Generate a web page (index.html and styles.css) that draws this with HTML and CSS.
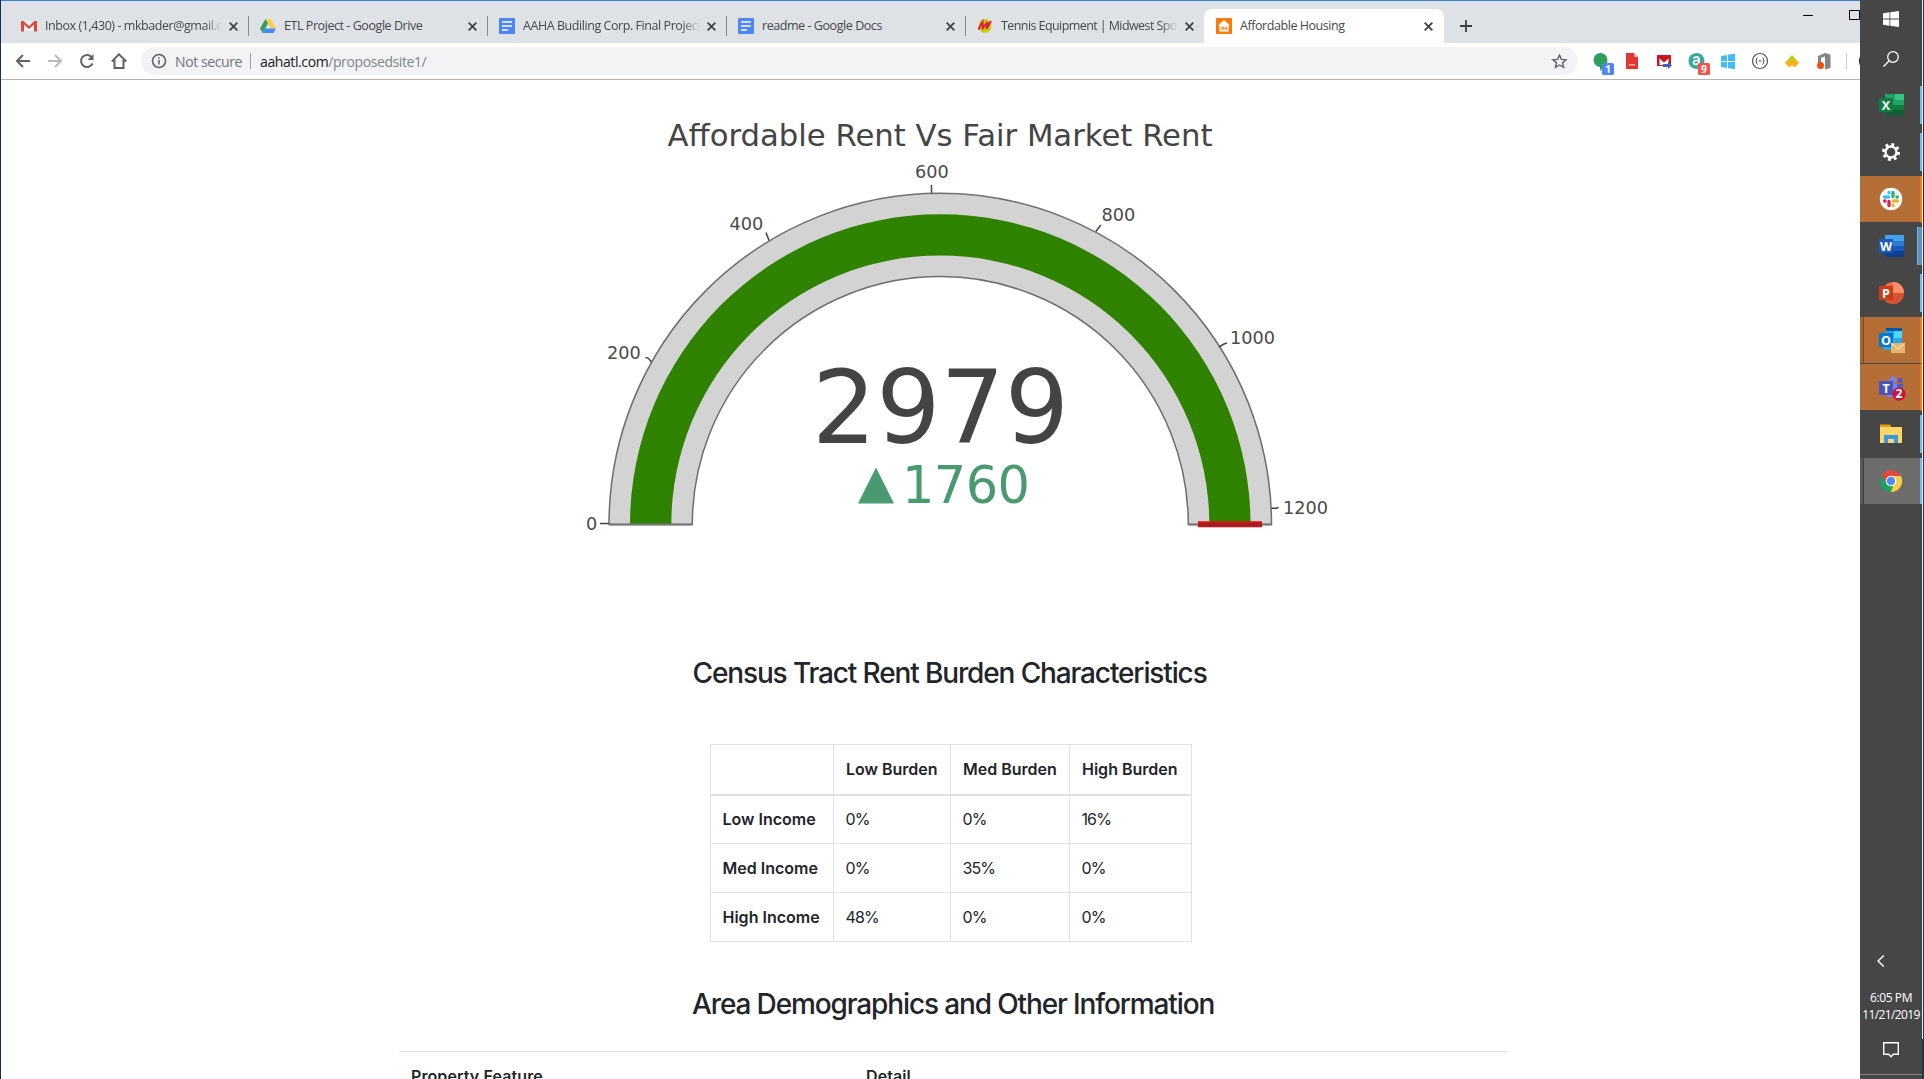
FILE: index.html
```html
<!DOCTYPE html>
<html lang="en">
<head>
<meta charset="utf-8">
<title>Affordable Housing</title>
<link rel="stylesheet" href="styles.css">
</head>
<body>
<div class="screen">
  <div class="browser">
    <div class="tabs">
      <div class="tab">
        <svg class="fav" viewBox="0 0 16 16"><path fill="#eee" d="M1 3h14v10H1z"/><path fill="#d54b3d" d="M0 3h2.500L8 8l5.500-5H16v10.500h-3V6.500L8 11 3 6.500v7H0z"/></svg>
        <span class="label fade">Inbox (1,430) - mkbader@gmail.com</span><svg class="x" viewBox="0 0 10 10"><path d="M1.500 1.500l7 7m0-7l-7 7"/></svg>
      </div>
      <div class="tab">
        <svg class="fav" viewBox="0 0 16 16"><path fill="#ffcf3f" d="M5.500 1h5L16 10.500h-5z"/><path fill="#31a05f" d="M5.500 1L8 5.500 2.700 15 0 10.500z"/><path fill="#4688f4" d="M5.300 10.500H16L13.400 15H2.700z"/></svg>
        <span class="label">ETL Project - Google Drive</span><svg class="x" viewBox="0 0 10 10"><path d="M1.500 1.500l7 7m0-7l-7 7"/></svg>
      </div>
      <div class="tab">
        <svg class="fav" viewBox="0 0 16 16"><rect width="16" height="16" rx="1" fill="#4f86f7"/><path d="M3 4h10M3 8h10M3 12h6" stroke="#fff" stroke-width="1.700"/></svg>
        <span class="label fade">AAHA Budiling Corp. Final Project</span><svg class="x" viewBox="0 0 10 10"><path d="M1.500 1.500l7 7m0-7l-7 7"/></svg>
      </div>
      <div class="tab">
        <svg class="fav" viewBox="0 0 16 16"><rect width="16" height="16" rx="1" fill="#4f86f7"/><path d="M3 4h10M3 8h10M3 12h6" stroke="#fff" stroke-width="1.700"/></svg>
        <span class="label">readme - Google Docs</span><svg class="x" viewBox="0 0 10 10"><path d="M1.500 1.500l7 7m0-7l-7 7"/></svg>
      </div>
      <div class="tab last">
        <svg class="fav" viewBox="0 0 16 16"><ellipse cx="8" cy="8" rx="6.500" ry="7" fill="#c3cf12"/><path d="M1.500 11.500L5.500 4l.5 6 4.500-6-1 7 4.500-8" fill="none" stroke="#dc1e3c" stroke-width="2"/></svg>
        <span class="label fade tight">Tennis Equipment | Midwest Sports</span><svg class="x" viewBox="0 0 10 10"><path d="M1.500 1.500l7 7m0-7l-7 7"/></svg>
      </div>
      <div class="tab active">
        <svg class="fav" viewBox="0 0 16 16"><rect width="16" height="16" fill="#f97b0c"/><path fill="#fff" d="M8 2l6 5.500h-1.500v6h-9v-6H2z"/><path d="M5.800 12V9.500h1.500V12m1.800 0V9.500h1.300V12" fill="none" stroke="#f97b0c"/></svg>
        <span class="label">Affordable Housing</span><svg class="x" viewBox="0 0 10 10"><path d="M1.500 1.500l7 7m0-7l-7 7"/></svg>
      </div>
      <svg class="plus" viewBox="0 0 12 12"><path d="M6 0v12M0 6h12"/></svg>
      <svg class="winbtns" viewBox="0 0 60 14"><path d="M3 7.500h10M49.500 2.500h10v9h-10z"/></svg>
    </div>
    <div class="toolbar">
      <svg class="nav" viewBox="0 0 16 16"><path d="M15 8H2M8 2L2 8l6 6"/></svg>
      <svg class="nav off" viewBox="0 0 16 16"><path d="M1 8h13M8 2l6 6-6 6"/></svg>
      <svg class="nav" viewBox="0 0 16 16"><path d="M13.500 10.500A6 6 0 1 1 12.500 4"/><path d="M14.500 1v6h-6z" class="solid"/></svg>
      <svg class="nav" viewBox="0 0 16 16"><path d="M0.800 8.500L8 1.300l7.200 7.200M3.500 7v8h9V7"/></svg>
      <div class="omnibox">
        <svg class="info" viewBox="0 0 16 16"><circle cx="8" cy="8" r="6.500"/><path d="M8 7v4.500M8 4.300v1.500"/></svg>
        <span class="secure">Not secure</span><span class="bar"></span><span class="url">aahatl.com<span>/proposedsite1/</span></span>
        <svg class="star" viewBox="0 0 24 24"><path d="M12 3l2.700 6 6.500.6-4.900 4.300 1.500 6.400L12 16.900l-5.800 3.400 1.500-6.400-4.900-4.300 6.500-.6z"/></svg>
      </div>
      <div class="exts">
        <svg viewBox="0 0 24 26"><circle cx="8.500" cy="9" r="7" fill="#2e9e58"/><path d="M8 15v5l5-6" fill="#2e9e58"/><rect x="10" y="12" width="12" height="12" rx="1.500" fill="#4f86f7"/><text x="16" y="22">1</text></svg>
        <svg viewBox="0 0 24 26"><path fill="#e03530" d="M2 2h8l4 4v12H2z"/><path fill="#ffb0a8" d="M10 2l4 4h-4zM5 13h6v1.500H5z"/></svg>
        <svg viewBox="0 0 24 26"><path fill="#c8171e" d="M1 4h14v11H1z"/><path fill="#fff" d="M3.500 14V7L8 11l4.500-4v7z"/><path d="M2 5l6 5.500L14 5" fill="none" stroke="#c8171e" stroke-width="1.600"/><path fill="#3c62ba" d="M7 13h5v-2l4 3.500-4 3.500v-2H7z"/></svg>
        <svg viewBox="0 0 24 26"><circle cx="8.500" cy="10" r="8" fill="#3aa79b"/><path d="M5.500 7.500Q7 5.500 9.500 6q1.500.5 1.500 2v5.500M11 9.500q-5.500-.5-5.500 2 .5 2.500 3 1.800 2-.6 2.500-2" fill="none" stroke="#fff" stroke-width="1.800"/><rect x="10" y="12" width="12" height="12" rx="1.500" fill="#f9504c"/><text x="16" y="22">9</text></svg>
        <svg viewBox="0 0 24 26"><path fill="#41bdf5" d="M1 5l6-1v6H1zM8 3.800l7-1.200V10H8zM1 11h6v6l-6-1zM8 11h7v7.200L8 17z"/></svg>
        <svg viewBox="0 0 24 26"><circle cx="8" cy="10" r="7.500" fill="#fff" stroke="#555" stroke-width="1.200"/><path d="M5.500 6.500Q4 7 4.700 9l-1 1 1 1q-.7 2 .8 2.500M10.500 6.500q1.500.5.800 2.500l1 1-1 1q.7 2-.8 2.500M6.500 10h3" fill="none" stroke="#444"/></svg>
        <svg viewBox="0 0 24 26"><path fill="#ffae14" d="M1 11.500l4.500-4 2.500 2 2.500-2 4.500 4-4 5-3-2.500-3 2.500z"/><path fill="#bccc14" d="M8 4l4 4.500-4 3.500-4-3.500z"/></svg>
        <svg viewBox="0 0 24 26"><path fill="#858585" d="M2 5l7-3 5.500 1.500V17L9 18.500V5.500L5 7v5l-3 1z"/><circle cx="4.500" cy="14.500" r="3.500" fill="#f04e0c"/></svg>
      </div>
      <span class="extbar"></span><span class="avatar"></span>
    </div>
    <main>
      <svg class="gauge" viewBox="580 110 760 430">
        <g class="title"><text x="667.500" y="145.500" textLength="545" lengthAdjust="spacingAndGlyphs">Affordable Rent Vs Fair Market Rent</text></g>
        <path class="ring" d="M609 524.500A331.250 331.250 0 0 1 1271.500 524.500H1188.300A248 248 0 0 0 692.300 524.500Z"/>
        <path class="value" d="M630 524.500A310.250 310.250 0 0 1 1250.500 524.500H1209.300A269 269 0 0 0 671.300 524.500Z"/>
        <path class="base" d="M609 524.500H692.300M1188.300 524.500H1271.500"/>
        <path class="limit" d="M1198 524.300h64"/><path class="limitline" d="M1198 524.500h64"/>
        <path class="ticks" d="M600 523.500h9M645.500 357.500l3 .8 3 4M766 232.500l3 8M931.500 185v8M1100.800 225l-5 6.500M1227 343l-3 1-5 3M1278.500 507.500l-2 .8h-5"/>
        <g class="scale"><text x="586" y="530">0</text><text x="607" y="358.500">200</text><text x="729.500" y="230">400</text><text x="915" y="177.500">600</text><text x="1101.500" y="221">800</text><text x="1230" y="343.500">1000</text><text x="1283" y="513.500">1200</text></g>
        <text class="big" x="812" y="442.700" textLength="257">2979</text>
        <path class="delta" d="M858 503.500l18-36 18 36z"/>
        <text class="delta" x="902" y="503.200" textLength="128">1760</text>
      </svg>
      <h3 class="h-census">Census Tract Rent Burden Characteristics</h3>
      <table class="burden">
        <colgroup><col class="c1"><col class="c2"><col class="c3"><col class="c4"></colgroup>
        <thead><tr><th></th><th>Low Burden</th><th>Med Burden</th><th>High Burden</th></tr></thead>
        <tbody>
          <tr><th>Low Income</th><td>0%</td><td>0%</td><td>16%</td></tr>
          <tr><th>Med Income</th><td>0%</td><td>35%</td><td>0%</td></tr>
          <tr><th>High Income</th><td>48%</td><td>0%</td><td>0%</td></tr>
        </tbody>
      </table>
      <h3 class="h-area">Area Demographics and Other Information</h3>
      <div class="feature"><b>Property Feature</b><b>Detail</b></div>
    </main>
  </div>
  <aside class="taskbar">
    <div class="slot start"><svg class="i16" viewBox="0 0 16 16"><path fill="#fff" d="M0 2.200l6.500-.9v6.300H0zM7.300 1.200L16 0v7.600H7.300zM0 8.400h6.500v6.300L0 13.800zM7.300 8.400H16V16l-8.700-1.200z"/></svg></div>
    <div class="slot search"><svg class="i16" viewBox="0 0 16 16"><circle cx="10" cy="6" r="5.300" fill="none" stroke="#fff" stroke-width="1.300"/><path d="M6.200 9.800L.5 15.500" stroke="#fff" stroke-width="1.400"/></svg></div>
    <div class="slot run"><svg class="i26" viewBox="0 0 26 24"><path fill="#21a366" d="M7 1h19v22H7z"/><path fill="#33c481" d="M17 1h9v6h-9z"/><path fill="#107c41" d="M7 12h19v6H7z"/><path fill="#185c37" d="M7 17h19v6H7z"/><path fill="#107c41" d="M1 5h14v14H1z"/><text x="8" y="16.500">X</text></svg></div>
    <div class="slot run"><svg class="i26" viewBox="0 0 26 24"><circle cx="13" cy="12" r="5.500" fill="none" stroke="#fff" stroke-width="2.400"/><circle cx="13" cy="12" r="7.600" fill="none" stroke="#fff" stroke-width="2.800" stroke-dasharray="3 2.970"/></svg></div>
    <div class="slot alert"><svg class="i26" viewBox="0 0 26 24"><circle cx="13" cy="12" r="11.200" fill="#fff"/><g stroke-width="3.400" stroke-linecap="round"><path stroke="#36c5f0" d="M6.500 10h4M11 5.500v.3"/><path stroke="#2eb67d" d="M15 5.500v4M19 10h.3"/><path stroke="#ecb22e" d="M15.500 14h4M15 18.500v-.3"/><path stroke="#e01e5a" d="M11 14.500v4M7 14h-.3"/></g></svg></div>
    <div class="slot run multi"><svg class="i26" viewBox="0 0 26 24"><path fill="#2b7cd3" d="M7 1h19v22H7z"/><path fill="#41a5ee" d="M7 1h19v6H7z"/><path fill="#185abd" d="M7 12h19v6H7z"/><path fill="#103f91" d="M7 17h19v6H7z"/><path fill="#185abd" d="M1 5h14v14H1z"/><text x="8" y="16.500">W</text></svg></div>
    <div class="slot run"><svg class="i26" viewBox="0 0 26 24"><circle cx="15" cy="12" r="11" fill="#ed6c47"/><path fill="#ff8f6b" d="M15 1a11 11 0 0 1 11 11H15z"/><path fill="#d35230" d="M4 12h22a11 11 0 0 1-22 0z"/><path fill="#c43e1c" d="M1 5h14v14H1z"/><text x="8" y="16.500">P</text></svg></div>
    <div class="slot alert stack"><svg class="i26" viewBox="0 0 26 24"><path fill="#28a8ea" d="M8 0h16v22H6V12z"/><path fill="#0358a7" d="M8 0h16v3H8z"/><path fill="#50d9ff" d="M16 3h8v7h-8z"/><path fill="#0078d4" d="M1 5h14v14H1z"/><text x="8" y="16.500">O</text><path fill="#e8b56d" d="M13 15h14v10H13z"/><path d="M13 15l7 6 7-6" fill="none" stroke="#fff3dc"/></svg></div>
    <div class="slot alert teams"><svg class="i26" viewBox="0 0 26 24"><circle cx="15" cy="4" r="3.500" fill="#7b83eb"/><circle cx="22" cy="4.500" r="2.500" fill="#5059c9"/><path fill="#7b83eb" d="M9 8h11v13H9z"/><path fill="#5059c9" d="M19 8h6v9h-6z"/><path fill="#4b53bc" d="M1 5h14v14H1z"/><text x="8" y="16.500">T</text><circle cx="21" cy="18" r="6.700" fill="#c7153c"/><text x="21" y="22.200" class="n2">2</text></svg></div>
    <div class="slot run"><svg class="i26" viewBox="0 0 26 24"><path fill="#e3a008" d="M2 2.500h10l2 3H2z"/><path fill="#ffd768" d="M2 5h22v16H2z"/><path fill="#3a96dd" d="M6 13h14v8h-4v-4h-6v4H6z"/></svg></div>
    <div class="slot run current"><svg class="i26" viewBox="0 0 26 24"><path fill="#dd4b3e" d="M3.500 6.500A11 11 0 0 1 22.500 6.500L13 12z"/><path fill="#ffcd46" d="M22.500 6.500A11 11 0 0 1 13 23l0-11z"/><path fill="#1aa260" d="M13 23A11 11 0 0 1 3.500 6.500L8 15l7 2z"/><path fill="#dd4b3e" d="M3.500 6.500L13 7h9.800L18 12H8z"/><path fill="#ffcd46" d="M13 7h9.800a11 11 0 0 1-9.800 16l4-7z"/><circle cx="13" cy="12" r="5.300" fill="#fff"/><circle cx="13" cy="12" r="4.200" fill="#4c8bf5"/></svg></div>
    <div class="tray">
      <svg class="chev" viewBox="0 0 8 12"><path d="M6.800.5L1 6l5.800 5.500"/></svg>
      <span class="time">6:05 PM</span><span class="date">11/21/2019</span>
      <svg class="note" viewBox="0 0 16 17"><path d="M.7.7h14.600v11.600h-5L8 14.800l-2.300-2.500h-5z"/></svg>
    </div>
  </aside>
  <div class="edge"></div>
</div>
</body>
</html>
```
FILE: styles.css
```css
* { box-sizing: border-box; }
body { margin: 0; background: #fff; font-family: "Open Sans", sans-serif; overflow: hidden; }
svg { display: block; flex: none; }
.screen { display: flex; width: 1924px; height: 1079px; overflow: hidden; }
.browser { width: 1860px; height: 1079px; border-left: 1px solid #1c2b52; overflow: hidden; flex: none; }

.tabs { height: 43px; background: #dee1e6; border-top: 1px solid #3982d6; padding-top: 8px; padding-left: 8px; display: flex; }
.tab { width: 239px; height: 34px; display: flex; align-items: center; padding: 0 9.5px 0 12px; position: relative; flex: none; }
.tab::after { content: ""; position: absolute; right: -1px; top: 7px; width: 1px; height: 20px; background: #85888d; }
.tab.last::after, .tab.active::after { display: none; }
.tab.active { background: #fff; border-radius: 8px 8px 0 0; width: 240px; padding-right: 10.5px; }
.fav { width: 16px; height: 16px; }
.label { flex: 1; min-width: 0; margin-left: 8px; font-size: 12.5px; line-height: 18px; letter-spacing: -.44px; color: #45494d; white-space: nowrap; overflow: hidden; }
.label.tight { letter-spacing: -.58px; }
.fade { -webkit-mask-image: linear-gradient(90deg, #000 90%, transparent); mask-image: linear-gradient(90deg, #000 90%, transparent); }
.x { width: 11px; height: 11px; margin-left: 6px; }
.x path { stroke: #3c4043; stroke-width: 1.6; }
.plus { width: 12px; height: 12px; margin: 11px 0 0 16px; }
.plus path { stroke: #3c4043; stroke-width: 1.8; }
.winbtns { width: 60px; height: 14px; margin: -1px 0 0 auto; }
.winbtns path { stroke: #000; fill: none; }

.toolbar { height: 37px; border-bottom: 1px solid #b4b4b5; display: flex; align-items: center; padding-left: 14px; background: #fff; overflow: hidden; }
.nav { width: 16px; height: 16px; margin-right: 16px; fill: none; stroke: #5f6368; stroke-width: 2; }
.nav .solid { fill: #5f6368; stroke: none; }
.nav.off { stroke: #b9bbbe; }
.omnibox { width: 1437px; height: 28px; border-radius: 14px; background: #f1f3f4; display: flex; align-items: center; padding: 0 10px; margin-left: -2px; font-size: 14px; letter-spacing: -.4px; flex: none; }
.info { width: 16px; height: 16px; fill: none; stroke: #5f6368; stroke-width: 1.6; }
.secure { color: #70757a; margin-left: 8px; }
.bar { width: 1px; height: 16px; background: #9aa0a6; margin: 0 9px 0 8px; }
.url { color: #202124; }
.url span { color: #80868b; }
.star { width: 17px; height: 17px; margin-left: auto; fill: none; stroke: #5f6368; stroke-width: 2; }
.exts { display: flex; gap: 8px; margin: 5px 0 0 14px; flex: none; }
.exts svg { width: 24px; height: 26px; }
.exts text { font: bold 10.500px "Open Sans", sans-serif; fill: #fff; text-anchor: middle; }
.extbar { width: 1px; height: 16px; background: #c9cbce; margin: 0 12px 0 6px; flex: none; }
.avatar { width: 20px; height: 20px; border-radius: 50%; background: #222; flex: none; }

.gauge { width: 760px; height: 430px; margin: 30px 0 0 579px; font-family: "DejaVu Sans", sans-serif; }
.title { font-size: 30.5px; fill: #444; }
.ring { fill: #d3d3d3; stroke: #444; stroke-opacity: .75; stroke-width: 1.5; }
.value { fill: #2e8200; }
.base { stroke: #777; stroke-width: 2; }
.limit { stroke: #e30d12; stroke-width: 6; }
.limitline { stroke: #91232a; stroke-width: 2.600; }
.ticks { stroke: #444; stroke-width: 1.500; fill: none; }
.scale { font-size: 17.700px; fill: #4a4a4a; }
.big { font-size: 101px; fill: #444; }
.delta { font-size: 51px; fill: #4a9a70; }

h3 { margin: 0; font: 500 28px/34px "Inter", sans-serif; letter-spacing: -1.13px; color: #212529; white-space: nowrap; }
.h-census { margin: 116px 0 0 691.500px; }
.h-area { margin: 45px 0 0 691px; }
.burden { margin: 54px 0 0 709px; width: 481px; table-layout: fixed; border-collapse: collapse; font: 400 16px/24px "Inter", sans-serif; color: #212529; }
.c1 { width: 123px; } .c2 { width: 117px; } .c3 { width: 119px; } .c4 { width: 122px; }
.burden th, .burden td { border: 1px solid #dee2e6; height: 49px; padding: 0 0 0 12px; text-align: left; white-space: nowrap; }
.burden th { font-weight: 600; letter-spacing: 0; }
.burden tbody th { padding-left: 11.500px; }
.burden td { letter-spacing: -.9px; padding-left: 11.500px; }
.burden thead th { border-bottom-width: 2px; height: 50px; letter-spacing: 0; }
.feature { margin: 30px 0 0 398px; width: 1108px; border-top: 1px solid #dee2e6; padding: 12px; display: grid; grid-template-columns: 455px 1fr; font: 16px/24px "Inter", sans-serif; color: #212529; }
.feature b { font-weight: 600; letter-spacing: .1px; }

.taskbar { width: 62px; height: 1079px; background: #464646; display: flex; flex-direction: column; flex: none; }
.slot { height: 47px; display: flex; align-items: center; justify-content: center; position: relative; flex: none; }
.slot.start { height: 38px; }
.slot.search { height: 44px; padding-bottom: 2px; }
.i16 { width: 16px; height: 16px; }
.i26 { width: 26px; height: 24px; overflow: visible; }
.run .i26 { margin-bottom: 2px; }
.teams .i26 { margin-top: 2px; }
.i26 text { font: bold 12.500px "Open Sans", sans-serif; fill: #fff; text-anchor: middle; }
.i26 .n2 { font-size: 12px; }
.run::after { content: ""; position: absolute; right: 0; top: 4px; width: 2px; height: 38px; background: #78b7ee; }
.multi::after { width: 4px; background: #5e92bf; border-left: 1px solid #7fb0dc; }
.alert { background: #b56f36; border-right: 2px solid #ff7a00; border-bottom: 1px solid #464646; padding-left: 2px; }
.stack { box-shadow: inset 3px 0 #a9652f, inset 4px 0 #7c4a20; }
.current { background: linear-gradient(90deg, #5a5a5a 3px, #404040 3px, #404040 4px, #6d6d6d 4px); height: 46px; }
.current .i26 { margin-bottom: 0; }
.current::after { top: 0; height: 46px; }
.tray { margin-top: auto; height: 124px; display: flex; flex-direction: column; align-items: center; color: #fff; border-bottom: 1px solid #888; margin-bottom: 4px; font-size: 12px; line-height: 17px; }
.chev { width: 8px; height: 12px; margin: 4px 20px 0 0; fill: none; stroke: #fff; stroke-width: 1.500; }
.time { margin-top: 22px; letter-spacing: -.4px; }
.date { letter-spacing: -.6px; }
.note { width: 16px; height: 17px; margin-top: 19px; fill: none; stroke: #fff; stroke-width: 1.400; }
.edge { width: 2px; background: linear-gradient(#e8ebee 1039px, #1d3a40 1039px); border-right: 1px solid #1d3a40; }
```
